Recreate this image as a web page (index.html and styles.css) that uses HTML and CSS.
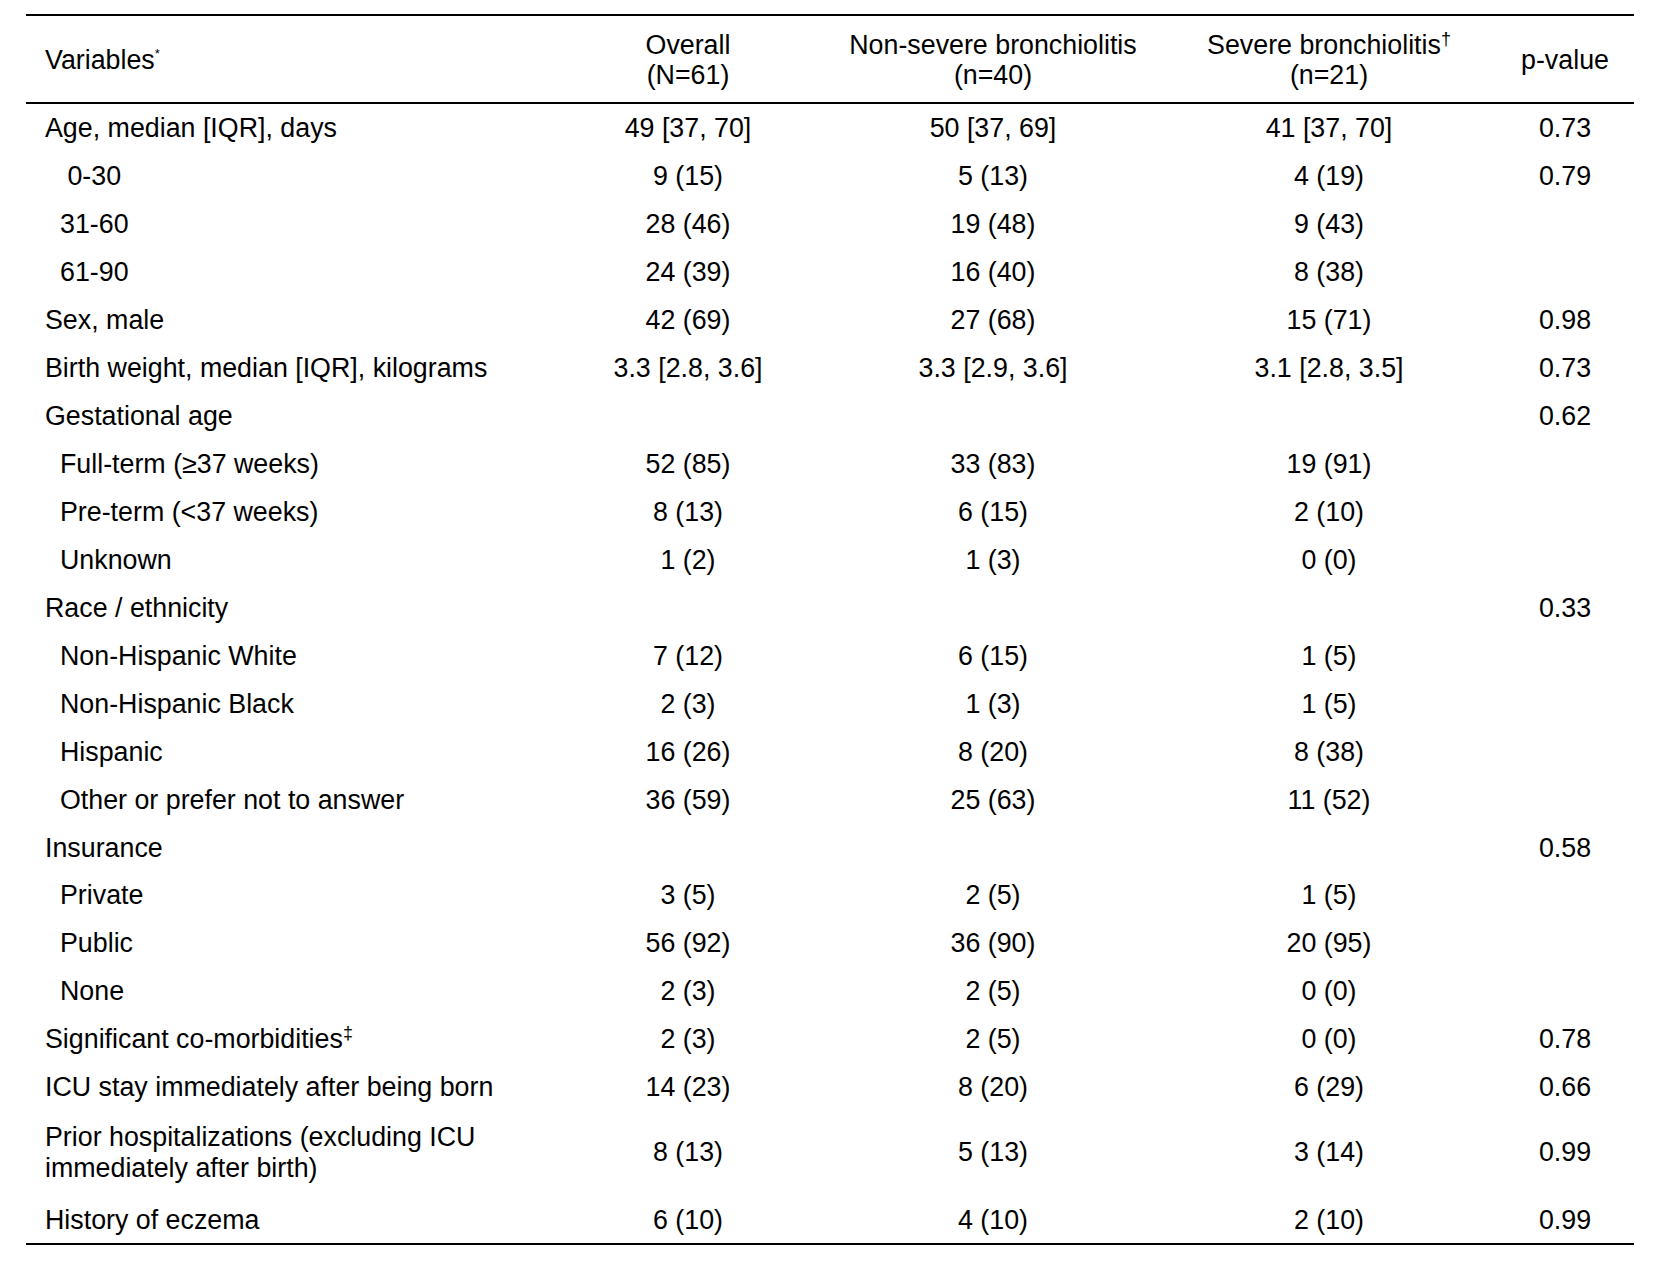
FILE: index.html
```html
<!DOCTYPE html>
<html lang="en">
<head>
<meta charset="utf-8">
<title>Baseline characteristics</title>
<link rel="stylesheet" href="styles.css">
</head>
<body>
<div class="page">
<table class="tbl">
  <colgroup>
    <col class="c-var">
    <col class="c-all">
    <col class="c-non">
    <col class="c-sev">
    <col class="c-p">
  </colgroup>
  <thead>
    <tr>
      <th class="var">Variables<sup class="ast">*</sup></th>
      <th>Overall<br>(N=61)</th>
      <th>Non-severe bronchiolitis<br>(n=40)</th>
      <th>Severe bronchiolitis<sup class="dag">†</sup><br>(n=21)</th>
      <th>p-value</th>
    </tr>
  </thead>
  <tbody>
    <tr><td class="var">Age, median [IQR], days</td><td>49 [37, 70]</td><td>50 [37, 69]</td><td>41 [37, 70]</td><td>0.73</td></tr>
    <tr><td class="var sub">&nbsp;0-30</td><td>9 (15)</td><td>5 (13)</td><td>4 (19)</td><td>0.79</td></tr>
    <tr><td class="var sub">31-60</td><td>28 (46)</td><td>19 (48)</td><td>9 (43)</td><td></td></tr>
    <tr><td class="var sub">61-90</td><td>24 (39)</td><td>16 (40)</td><td>8 (38)</td><td></td></tr>
    <tr><td class="var">Sex, male</td><td>42 (69)</td><td>27 (68)</td><td>15 (71)</td><td>0.98</td></tr>
    <tr><td class="var">Birth weight, median [IQR], kilograms</td><td>3.3 [2.8, 3.6]</td><td>3.3 [2.9, 3.6]</td><td>3.1 [2.8, 3.5]</td><td>0.73</td></tr>
    <tr><td class="var">Gestational age</td><td></td><td></td><td></td><td>0.62</td></tr>
    <tr><td class="var sub">Full-term (≥37 weeks)</td><td>52 (85)</td><td>33 (83)</td><td>19 (91)</td><td></td></tr>
    <tr><td class="var sub">Pre-term (&lt;37 weeks)</td><td>8 (13)</td><td>6 (15)</td><td>2 (10)</td><td></td></tr>
    <tr><td class="var sub">Unknown</td><td>1 (2)</td><td>1 (3)</td><td>0 (0)</td><td></td></tr>
    <tr><td class="var">Race / ethnicity</td><td></td><td></td><td></td><td>0.33</td></tr>
    <tr><td class="var sub">Non-Hispanic White</td><td>7 (12)</td><td>6 (15)</td><td>1 (5)</td><td></td></tr>
    <tr><td class="var sub">Non-Hispanic Black</td><td>2 (3)</td><td>1 (3)</td><td>1 (5)</td><td></td></tr>
    <tr><td class="var sub">Hispanic</td><td>16 (26)</td><td>8 (20)</td><td>8 (38)</td><td></td></tr>
    <tr><td class="var sub">Other or prefer not to answer</td><td>36 (59)</td><td>25 (63)</td><td>11 (52)</td><td></td></tr>
    <tr><td class="var">Insurance</td><td></td><td></td><td></td><td>0.58</td></tr>
    <tr><td class="var sub">Private</td><td>3 (5)</td><td>2 (5)</td><td>1 (5)</td><td></td></tr>
    <tr><td class="var sub">Public</td><td>56 (92)</td><td>36 (90)</td><td>20 (95)</td><td></td></tr>
    <tr><td class="var sub">None</td><td>2 (3)</td><td>2 (5)</td><td>0 (0)</td><td></td></tr>
    <tr><td class="var">Significant co-morbidities<sup class="dag">‡</sup></td><td>2 (3)</td><td>2 (5)</td><td>0 (0)</td><td>0.78</td></tr>
    <tr><td class="var">ICU stay immediately after being born</td><td>14 (23)</td><td>8 (20)</td><td>6 (29)</td><td>0.66</td></tr>
    <tr class="tall"><td class="var">Prior hospitalizations (excluding ICU immediately after birth)</td><td>8 (13)</td><td>5 (13)</td><td>3 (14)</td><td>0.99</td></tr>
    <tr class="last"><td class="var">History of eczema</td><td>6 (10)</td><td>4 (10)</td><td>2 (10)</td><td>0.99</td></tr>
  </tbody>
</table>
</div>
</body>
</html>
```

FILE: styles.css
```css
html, body {
  margin: 0;
  padding: 0;
  background: #ffffff;
}

body {
  font-family: "Liberation Sans", Arial, sans-serif;
  color: #000000;
}

.page {
  padding: 14px 34px 0 26px;
}

.tbl {
  width: 1608px;
  table-layout: fixed;
  border-collapse: separate;
  border-spacing: 0;
  border-top: 2px solid #000;
  border-bottom: 2px solid #000;
  font-size: 26.8px;
  line-height: 30px;
}

.c-var { width: 526px; }
.c-all { width: 272px; }
.c-non { width: 338px; }
.c-sev { width: 334px; }
.c-p   { width: 138px; }

.tbl th {
  font-weight: normal;
  text-align: center;
  vertical-align: middle;
  padding: 14px 0 12px;
  border-bottom: 2px solid #000;
}

.tbl td {
  text-align: center;
  vertical-align: middle;
  padding: 9.45px 0 8.5px;
}

.tbl th.var,
.tbl td.var {
  text-align: left;
  padding-left: 19px;
}

.tbl td.sub {
  padding-left: 34px;
}

.tbl tr.tall td {
  line-height: 31px;
  padding-top: 11px;
  padding-bottom: 11px;
}

.tbl tr.last td {
  padding-top: 10px;
  padding-bottom: 8.5px;
}

sup {
  line-height: 0;
}

sup.ast {
  font-size: 13px;
  vertical-align: 11px;
}

sup.dag {
  font-size: 18px;
  vertical-align: 9px;
}
```
